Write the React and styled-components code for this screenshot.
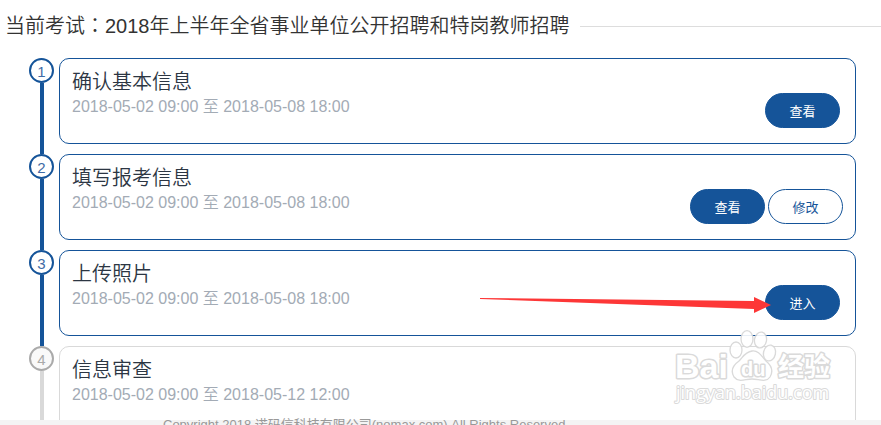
import styled, { createGlobalStyle } from 'styled-components';

const steps = [
  {
    title: '确认基本信息',
    time: '2018-05-02 09:00 至 2018-05-08 18:00',
    active: true,
    actions: [{ label: '查看', primary: true }],
  },
  {
    title: '填写报考信息',
    time: '2018-05-02 09:00 至 2018-05-08 18:00',
    active: true,
    actions: [{ label: '查看', primary: true }, { label: '修改' }],
  },
  {
    title: '上传照片',
    time: '2018-05-02 09:00 至 2018-05-08 18:00',
    active: true,
    pointed: true,
    actions: [{ label: '进入', primary: true }],
  },
  {
    title: '信息审查',
    time: '2018-05-02 09:00 至 2018-05-12 12:00',
    actions: [],
  },
];

const App = () => {
  return (
    <>
      <GlobalStyle />
      <Page>
        <Header>
          <PageTitle>
            当前考试<Colon>：</Colon>2018年上半年全省事业单位公开招聘和特岗教师招聘
          </PageTitle>
          <HeaderLine />
        </Header>
        <StepList>
          {steps.map((step, i) => (
            <Step key={step.title}>
              <Rail>
                <StepNumber $active={step.active}>{i + 1}</StepNumber>
                <RailLine $active={step.active} />
              </Rail>
              <Card $active={step.active}>
                <div>
                  <StepTitle>{step.title}</StepTitle>
                  <StepTime>{step.time}</StepTime>
                </div>
                <Actions>
                  {step.actions.map((action) => (
                    <ActionButton key={action.label} type="button" $primary={action.primary}>
                      {action.label}
                    </ActionButton>
                  ))}
                  {step.pointed && <Arrow />}
                </Actions>
              </Card>
            </Step>
          ))}
        </StepList>
        <Footer>
          <Copyright>Copyright 2018 诺码信科技有限公司(nomax.com) All Rights Reserved</Copyright>
        </Footer>
        <Watermark />
      </Page>
    </>
  );
};

const Arrow = () => (
  <ArrowSvg width="291" height="16" viewBox="0 0 291 16" aria-hidden="true">
    <path d="M0 1 L274 4 L274 0 L291 8 L274 16 L274 12 L0 2 Z" fill="#fd3737" />
  </ArrowSvg>
);

const Watermark = () => (
  <WatermarkSvg width="162" height="80" viewBox="0 0 162 80" aria-hidden="true">
    <g fill="#fff" stroke="#d6d6d6" strokeWidth="1.3" strokeLinejoin="round" opacity="0.9">
      <ellipse cx="64" cy="22" rx="6" ry="8" />
      <ellipse cx="75" cy="11" rx="6" ry="8.3" />
      <ellipse cx="88.5" cy="12" rx="6" ry="8" transform="rotate(10 88.5 12)" />
      <ellipse cx="97.5" cy="25" rx="6" ry="8" transform="rotate(12 97.5 25)" />
      <path d="M80 23 C87 22 90 29 94 33 C100 38 101 44 98 49 C94 55 87 51 80 51 C73 51 67 55 62 49 C59 44 60 38 67 33 C71 29 73 24 80 23 Z" />
      <WatermarkText x="3" y="50" fontSize="34">Bai</WatermarkText>
      <WatermarkText x="69" y="48" fontSize="20">du</WatermarkText>
      <WatermarkText x="106" y="48" fontSize="26">经验</WatermarkText>
      <WatermarkUrl x="4" y="71" fontSize="18">jingyan.baidu.com</WatermarkUrl>
    </g>
  </WatermarkSvg>
);

const GlobalStyle = createGlobalStyle`
  * {
    box-sizing: border-box;
  }
  body {
    margin: 0;
    background: #fff;
    font-family: 'Liberation Sans', 'Noto Sans CJK SC', sans-serif;
  }
`;

const Page = styled.div`
  position: relative;
  display: flex;
  flex-direction: column;
  height: 100vh;
  overflow: hidden;
`;

const Header = styled.header`
  display: flex;
  align-items: center;
  gap: 10px;
  flex-shrink: 0;
  padding: 11px 0 17px 5px;
`;

const PageTitle = styled.h1`
  margin: 0;
  font-size: 20px;
  font-weight: 350;
  line-height: 30px;
  color: #333;
  white-space: nowrap;
`;

const Colon = styled.span`
  font-family: 'Noto Sans CJK TC', sans-serif;
  line-height: 1;
`;

const HeaderLine = styled.div`
  flex: 1;
  height: 1px;
  background: #ddd;
`;

const StepList = styled.ol`
  flex: 1;
  min-height: 0;
  margin: 0;
  padding: 0 25px 0 29px;
  list-style: none;
  overflow: hidden;
`;

const Step = styled.li`
  display: flex;
  gap: 5px;
`;

const Rail = styled.div`
  display: flex;
  flex-direction: column;
  align-items: center;
  width: 25px;
`;

const StepNumber = styled.span`
  width: 25px;
  height: 25px;
  border: 2px solid ${({ $active }) => ($active ? '#155499' : '#aaa')};
  border-radius: 50%;
  background: ${({ $active }) => ($active ? '#fff' : '#f9f9f9')};
  color: ${({ $active }) => ($active ? '#3f6ba6' : '#aaa')};
  font-size: 15px;
  line-height: 23px;
  text-align: center;
`;

const RailLine = styled.div`
  flex: 1;
  width: 4px;
  background: ${({ $active }) => ($active ? '#155499' : '#d9d9d9')};
`;

const Card = styled.section`
  display: flex;
  flex: 1;
  justify-content: space-between;
  min-height: 86px;
  margin-bottom: 10px;
  padding: 10px 12px 15px;
  border: 1px solid ${({ $active }) => ($active ? '#155499' : '#d9d9d9')};
  border-radius: 10px;
`;

const StepTitle = styled.h2`
  margin: 0;
  font-size: 20px;
  font-weight: 350;
  line-height: 26px;
  color: #2c3643;
`;

const StepTime = styled.p`
  margin: 0;
  font-size: 16px;
  font-weight: 350;
  line-height: 24px;
  color: #a3abb5;
`;

const Actions = styled.div`
  position: relative;
  display: flex;
  align-self: flex-end;
`;

const ActionButton = styled.button`
  width: 75px;
  height: 35px;
  margin: 0 ${({ $primary }) => ($primary ? '3px' : '0')} 0 0;
  padding: 0;
  border: 1px solid #155499;
  border-radius: 18px;
  background: ${({ $primary }) => ($primary ? '#155499' : '#fff')};
  color: ${({ $primary }) => ($primary ? '#fff' : '#155499')};
  font-family: inherit;
  font-size: 13px;
  cursor: pointer;
`;

const ArrowSvg = styled.svg`
  position: absolute;
  top: 12px;
  right: 72px;
  pointer-events: none;
`;

const Footer = styled.footer`
  flex-shrink: 0;
  height: 5px;
  padding-left: 163px;
  background: #f4f4f4;
`;

const Copyright = styled.p`
  margin: -4px 0 0;
  font-size: 13px;
  line-height: 18px;
  color: #999;
  white-space: nowrap;
`;

const WatermarkSvg = styled.svg`
  position: absolute;
  right: 47px;
  bottom: 17px;
  pointer-events: none;
`;

const WatermarkText = styled.text`
  font-weight: 700;
  stroke-width: 3px;
  paint-order: stroke;
`;

const WatermarkUrl = styled.text`
  font-family: 'Open Sans', sans-serif;
  stroke-width: 2px;
  paint-order: stroke;
`;

export default App;
